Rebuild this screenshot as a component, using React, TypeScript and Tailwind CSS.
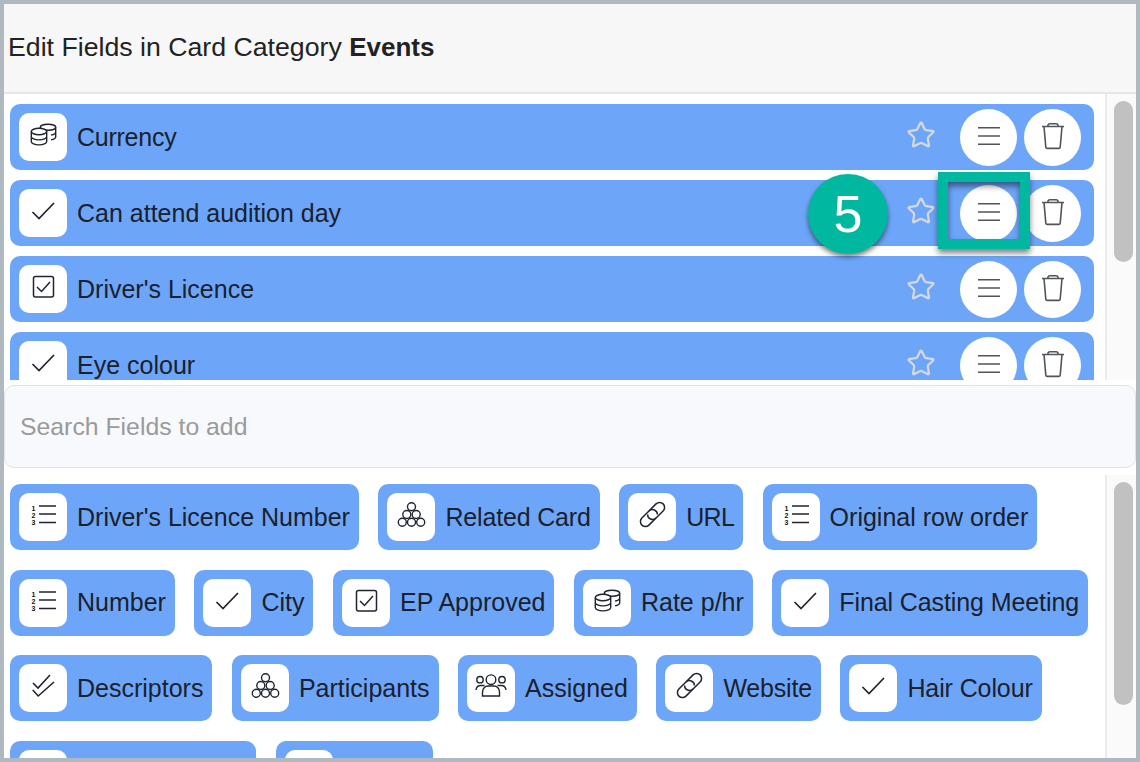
import { Star } from "lucide-react";
import type { ReactNode } from "react";

type IconName = "coins" | "check" | "checkbox" | "number" | "cluster" | "link" | "multi" | "users";

const stroke = "#1f2430";

function FieldIcon({ name }: { name: IconName }) {
  const shapes: Record<IconName, ReactNode> = {
    coins: (
      <g fill="none" stroke={stroke} strokeWidth="1.4">
        <ellipse cx="29" cy="14.200" rx="7.700" ry="3" />
        <path d="M36.700 14.200v9.500c0 1.400-2 2.600-4.600 3M36.700 19c0 1.500-2 2.600-4.600 3M21.300 14.200v2.400" />
        <ellipse cx="20" cy="18.500" rx="7.700" ry="3.200" fill="white" />
        <path d="M12.300 18.500v10c0 1.900 3.400 3.400 7.700 3.400s7.700-1.500 7.700-3.400v-10M12.300 23.500c0 1.900 3.400 3.400 7.700 3.400s7.700-1.500 7.700-3.400" />
      </g>
    ),
    check: <path d="M13.500 23l6.500 6.500L35 14" fill="none" stroke={stroke} strokeWidth="1.700" />,
    checkbox: (
      <g fill="none" stroke={stroke} strokeWidth="1.500">
        <rect x="14.500" y="11.500" width="20" height="20.500" rx="2" />
        <path d="M18 22l4.500 4.500L31 17" />
      </g>
    ),
    number: (
      <g fontSize="7" fontWeight="700" fontFamily="Liberation Sans" fill="#111">
        <text x="12.500" y="17.500">1</text>
        <text x="12.500" y="24.800">2</text>
        <text x="12.500" y="32">3</text>
        <path d="M20 13h17M20 21h17M20 29.500h17" stroke={stroke} strokeWidth="1.300" />
      </g>
    ),
    cluster: (
      <g fill="none" stroke={stroke} strokeWidth="1.400">
        <circle cx="24.500" cy="13.700" r="4" />
        <circle cx="19.800" cy="21.500" r="4" />
        <circle cx="29.200" cy="21.500" r="4" />
        <circle cx="15.300" cy="29.300" r="4" />
        <circle cx="24.500" cy="29.300" r="4" />
        <circle cx="33.700" cy="29.300" r="4" />
      </g>
    ),
    link: (
      <g fill="none" stroke={stroke} strokeWidth="1.500" transform="translate(24.500 21.500) rotate(-45)">
        <path d="M0 5H-10A5 5 0 0 1 -10 -5H0A5 5 0 0 1 3.500 3.500" />
        <path d="M0 -5H10A5 5 0 0 1 10 5H0A5 5 0 0 1 -3.500 -3.500" />
      </g>
    ),
    multi: (
      <path d="M14 19l5 5L31 11M13.700 26l5.500 6L35 18" fill="none" stroke={stroke} strokeWidth="1.600" />
    ),
    users: (
      <g fill="none" stroke={stroke} strokeWidth="1.400">
        <circle cx="24" cy="15.700" r="4.800" />
        <circle cx="13" cy="15.700" r="3.200" />
        <circle cx="35" cy="15.700" r="3.200" />
        <path d="M15.500 32v-4c0-3.500 2.500-6 5.500-6h6c3 0 5.500 2.500 5.500 6v4z" />
        <path d="M9 26c.300-3 2.400-4.500 5-4.500h3.500M39 26c-.300-3-2.400-4.500-5-4.500h-3.500" />
      </g>
    ),
  };
  return (
    <div className="w-12 h-12 shrink-0 rounded-[10px] bg-white">
      <svg width="48" height="48" viewBox="0 0 48 48" aria-hidden="true">
        {shapes[name]}
      </svg>
    </div>
  );
}

function MenuLines() {
  return (
    <svg width="24" height="20" viewBox="0 0 24 20" className="-mt-[3px]" aria-hidden="true">
      <path d="M1 1.700h22M1 10h22M1 18.300h22" stroke="#50555c" strokeWidth="1.600" />
    </svg>
  );
}

function TrashCan() {
  return (
    <svg width="24" height="28" viewBox="0 0 24 28" className="-mt-[2px]" aria-hidden="true" fill="none" stroke="#50555c" strokeWidth="1.600">
      <path d="M1 4.500h22M3 4.500l1.800 20.600c.1.800.6 1.300 1.400 1.300h11.600c.8 0 1.300-.5 1.400-1.300L21 4.500" />
      <path d="M7 4.500v-1q0-1.800 2-1.800h6q2 0 2 1.800v1" />
    </svg>
  );
}

const rows: { icon: IconName; label: string; labelClass?: string }[] = [
  { icon: "coins", label: "Currency", labelClass: "tracking-[-0.25px]" },
  { icon: "check", label: "Can attend audition day" },
  { icon: "checkbox", label: "Driver's Licence" },
  { icon: "check", label: "Eye colour" },
];

const chips: { icon: IconName; label: string; labelClass?: string; chipClass?: string }[] = [
  { icon: "number", label: "Driver's Licence Number" },
  { icon: "cluster", label: "Related Card", labelClass: "tracking-[-0.17px]" },
  { icon: "link", label: "URL", labelClass: "tracking-[-0.7px]" },
  { icon: "number", label: "Original row order" },
  { icon: "number", label: "Number" },
  { icon: "check", label: "City" },
  { icon: "checkbox", label: "EP Approved" },
  { icon: "coins", label: "Rate p/hr" },
  { icon: "check", label: "Final Casting Meeting", labelClass: "tracking-[-0.1px]" },
  { icon: "multi", label: "Descriptors" },
  { icon: "cluster", label: "Participants" },
  { icon: "users", label: "Assigned" },
  { icon: "link", label: "Website", labelClass: "tracking-[-0.2px]" },
  { icon: "check", label: "Hair Colour", labelClass: "tracking-[-0.1px]" },
  { icon: "check", label: "Phone Number", chipClass: "w-[246px]" },
  { icon: "check", label: "Gender", chipClass: "w-[157px]" },
];

function Scrollbar({ thumb }: { thumb: string }) {
  return (
    <div className="w-[31px] shrink-0 border-l-2 border-[#ebebeb] bg-[#fafafa] pt-[7px] pl-[7px]">
      <div className={`w-[19px] rounded-full bg-[#c1c1c1] ${thumb}`} />
    </div>
  );
}

export default function App() {
  return (
    <div
      className="relative w-[1140px] h-[762px] overflow-hidden border-4 border-[#b1b9c0] bg-white flex flex-col text-[#1a202c]"
      style={{ fontFamily: '"Liberation Sans", Arial, sans-serif' }}
    >
      <header className="h-[90px] shrink-0 flex items-center pl-1 pb-[2px] bg-[#f7f7f7] border-b-2 border-[#e6e6e6] text-[26.7px] text-[#222]">
        <span>
          Edit Fields in Card Category <b className="text-[26px]">Events</b>
        </span>
      </header>

      <section className="h-[286px] shrink-0 flex">
        <div className="flex-1 overflow-hidden pt-[10px] pl-[6px] pr-[11px] flex flex-col gap-[10px]">
          {rows.map((row) => (
            <div key={row.label} className="h-[66px] shrink-0 flex items-center pl-[9px] pr-[13px] rounded-[10px] bg-[#6da6f9]">
              <FieldIcon name={row.icon} />
              <span className={`ml-[10px] mt-px text-[25px] ${row.labelClass ?? ""}`}>{row.label}</span>
              <Star size={30} strokeWidth={1.8} className="ml-auto text-[#d5d9de] -mt-[4px]" aria-hidden="true" />
              <div className="ml-[24px] w-[57px] h-[57px] rounded-full bg-white flex items-center justify-center">
                <MenuLines />
              </div>
              <div className="ml-[7px] w-[57px] h-[57px] rounded-full bg-white flex items-center justify-center">
                <TrashCan />
              </div>
            </div>
          ))}
        </div>
        <Scrollbar thumb="h-[161px]" />
      </section>

      <div className="h-[83px] shrink-0 mt-[5px] flex items-center pl-[15px] rounded-[10px] border border-[#dfe2e8] bg-[#f8f9fd] text-[24.8px] text-[#9a9a9a]">
        Search Fields to add
      </div>

      <section className="flex-1 min-h-0 mt-[7px] flex">
        <div className="flex-1 overflow-hidden pt-[9px] pl-[6px] flex flex-wrap content-start gap-x-[19.5px] gap-y-[19.7px]">
          {chips.map((chip) => (
            <div key={chip.label} className={`h-[66px] flex items-center pl-[9px] pr-[9px] rounded-[10px] bg-[#6da6f9] ${chip.chipClass ?? ""}`}>
              <FieldIcon name={chip.icon} />
              <span className={`ml-[10px] mt-px text-[25px] whitespace-nowrap ${chip.labelClass ?? ""}`}>{chip.label}</span>
            </div>
          ))}
        </div>
        <Scrollbar thumb="h-[223px]" />
      </section>

      <div className="absolute left-[804px] top-[170px] w-20 h-20 rounded-full bg-[#00b8a0] shadow-[0_3px_5px_rgba(0,0,0,0.5)] flex items-center justify-center text-[52px] text-white">
        5
      </div>
      <div className="absolute left-[934px] top-[168px] w-[92px] h-[77px] border-[10px] border-[#00b8a0] shadow-[0_4px_6px_rgba(0,0,0,0.5),inset_0_4px_6px_rgba(0,0,0,0.5)]" />
    </div>
  );
}
